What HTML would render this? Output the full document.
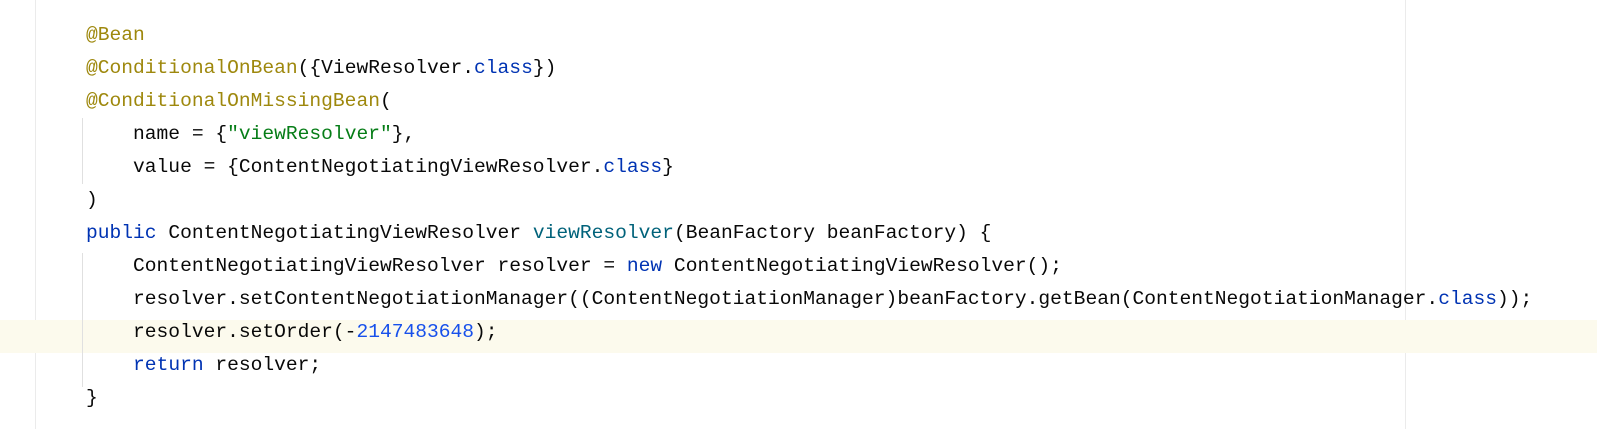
<!DOCTYPE html>
<html><head><meta charset="utf-8"><style>
body{margin:0;width:1597px;height:429px;background:#fff;position:relative;overflow:hidden}
.g{position:absolute;left:35px;top:0;width:1px;height:429px;background:#ebebeb}
.r{position:absolute;left:1405px;top:0;width:1px;height:429px;background:#ebebeb}
.hl{position:absolute;left:0;top:320px;width:1597px;height:33px;background:#fcfaed}
.ig{position:absolute;left:82px;width:1px;background:#e0e0e0}
pre{position:absolute;left:86px;top:19px;margin:0;font-family:"Liberation Mono",monospace;font-size:19.6px;line-height:33px;color:#080808}
.a{color:#9e880d}.k{color:#0033b3}.s{color:#067d17}.n{color:#1750eb}.m{color:#00627a}
</style></head><body>
<div class="g"></div><div class="r"></div><div class="hl"></div>
<div class="ig" style="top:118px;height:66px"></div>
<div class="ig" style="top:253px;height:134px"></div>
<pre><span class="a">@Bean</span>
<span class="a">@ConditionalOnBean</span>({ViewResolver.<span class="k">class</span>})
<span class="a">@ConditionalOnMissingBean</span>(
    name = {<span class="s">"viewResolver"</span>},
    value = {ContentNegotiatingViewResolver.<span class="k">class</span>}
)
<span class="k">public</span> ContentNegotiatingViewResolver <span class="m">viewResolver</span>(BeanFactory beanFactory) {
    ContentNegotiatingViewResolver resolver = <span class="k">new</span> ContentNegotiatingViewResolver();
    resolver.setContentNegotiationManager((ContentNegotiationManager)beanFactory.getBean(ContentNegotiationManager.<span class="k">class</span>));
    resolver.setOrder(-<span class="n">2147483648</span>);
    <span class="k">return</span> resolver;
}</pre>
</body></html>
